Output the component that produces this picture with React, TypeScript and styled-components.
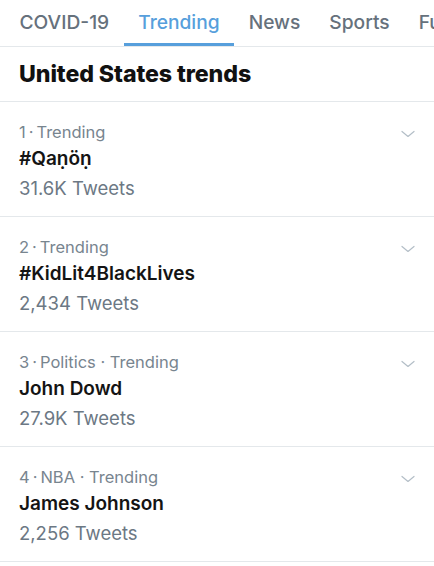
import React from "react";
import styled, { createGlobalStyle } from "styled-components";

const GlobalStyle = createGlobalStyle`
  html, body { margin: 0; padding: 0; background: #ffffff; }
  body { font-family: Inter, "Liberation Sans", Arial, sans-serif; -webkit-font-smoothing: antialiased; }
  * { box-sizing: border-box; }
`;

const Page = styled.div`
  width: 434px;
  height: 566px;
  overflow: hidden;
  background: #fff;
`;

const TabBar = styled.nav`
  display: flex;
  height: 47px;
  border-bottom: 1px solid #e4e8eb;
  padding-left: 5px;
  white-space: nowrap;
  overflow-x: auto;
  overflow-y: hidden;
  scrollbar-width: none;
  &::-webkit-scrollbar { display: none; }
`;

const Tab = styled.div<{ $active?: boolean }>`
  flex: none;
  padding: 0 14.5px;
  display: flex;
  align-items: center;
  height: 100%;
  font-size: 19.2px;
  font-weight: 500;
  color: ${(p) => (p.$active ? "#579fdc" : "#66717c")};
  border-bottom: 3px solid ${(p) => (p.$active ? "#579fdc" : "transparent")};
`;

const Header = styled.h2`
  margin: 0;
  height: 55px;
  display: flex;
  align-items: center;
  padding: 0 19px 1px;
  font-size: 23.2px;
  font-weight: 800;
  color: #111;
  border-bottom: 1px solid #e4e8eb;
  letter-spacing: -0.1px;
`;

const Row = styled.div`
  display: flex;
  height: 115px;
  padding: 18px 19px 0 19px;
  border-bottom: 1px solid #e4e8eb;
`;

const Body = styled.div`
  flex: 1;
  display: flex;
  flex-direction: column;
`;

const Meta = styled.div`
  font-size: 16.5px;
  color: #78858f;
  line-height: 24px;
`;

const Title = styled.div`
  font-size: 19px;
  font-weight: 600;
  color: #141414;
  line-height: 29px;
`;

const Count = styled.div`
  font-size: 18.5px;
  color: #6c7884;
  line-height: 30px;
`;

const Chevron = styled.svg`
  width: 14px;
  height: 8px;
  margin-top: 10px;
`;

const trends = [
  { meta: "1\u2009·\u2009Trending", title: "#Qaṇöṇ", count: "31.6K Tweets" },
  { meta: "2\u2009·\u2009Trending", title: "#KidLit4BlackLives", count: "2,434 Tweets" },
  { meta: "3\u2009·\u2009Politics · Trending", title: "John Dowd", count: "27.9K Tweets" },
  { meta: "4\u2009·\u2009NBA · Trending", title: "James Johnson", count: "2,256 Tweets" },
];

export default function App() {
  return (
    <Page>
      <GlobalStyle />
      <TabBar>
        <Tab>COVID-19</Tab>
        <Tab $active>Trending</Tab>
        <Tab>News</Tab>
        <Tab>Sports</Tab>
        <Tab>Fun</Tab>
      </TabBar>
      <Header>United States trends</Header>
      {trends.map((t) => (
        <Row key={t.title}>
          <Body>
            <Meta>{t.meta}</Meta>
            <Title>{t.title}</Title>
            <Count>{t.count}</Count>
          </Body>
          <Chevron viewBox="0 0 14 8">
            <path d="M1 1.5 L7 6.5 L13 1.5" fill="none" stroke="#b3bec7" strokeWidth="1.2" strokeLinecap="round" strokeLinejoin="round" />
          </Chevron>
        </Row>
      ))}
    </Page>
  );
}
